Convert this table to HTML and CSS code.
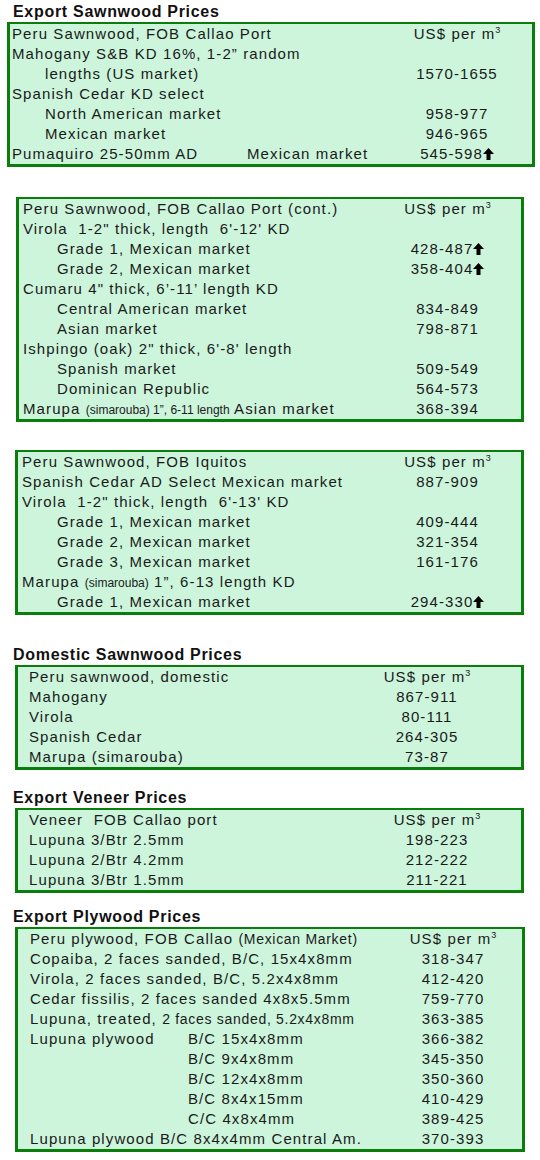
FILE: index.html
```html
<!DOCTYPE html>
<html lang="en">
<head>
<meta charset="utf-8">
<title>Peru Prices</title>
<link rel="stylesheet" href="styles.css">
</head>
<body>
<div class="page">
  <h2 class="heading h-first">Export Sawnwood Prices</h2>
  <div class="box box-a">
    <div class="row"><div class="lbl">Peru Sawnwood, FOB Callao Port</div><div class="val">US$ per m<sup class="sup">3</sup></div></div>
    <div class="row"><div class="lbl">Mahogany S&amp;B KD 16%, 1-2” random</div><div class="val"></div></div>
    <div class="row"><div class="lbl ind">lengths (US market)</div><div class="val">1570-1655</div></div>
    <div class="row"><div class="lbl">Spanish Cedar KD select</div><div class="val"></div></div>
    <div class="row"><div class="lbl ind">North American market</div><div class="val">958-977</div></div>
    <div class="row"><div class="lbl ind">Mexican market</div><div class="val">946-965</div></div>
    <div class="row"><div class="lbl"><span class="col1 w-puma">Pumaquiro 25-50mm AD</span><span>Mexican market</span></div><div class="val">545-598<svg class="up" viewBox="0 0 11 12"><path d="M5.5 0 L11 6 L7.5 6 L7.5 12 L3.5 12 L3.5 6 L0 6 Z"/></svg></div></div>
  </div>

  <div class="box box-b">
    <div class="row"><div class="lbl">Peru Sawnwood, FOB Callao Port (cont.)</div><div class="val">US$ per m<sup class="sup">3</sup></div></div>
    <div class="row"><div class="lbl">Virola&nbsp; 1-2" thick, length&nbsp; 6'-12' KD</div><div class="val"></div></div>
    <div class="row"><div class="lbl ind">Grade 1, Mexican market</div><div class="val">428-487<svg class="up" viewBox="0 0 11 12"><path d="M5.5 0 L11 6 L7.5 6 L7.5 12 L3.5 12 L3.5 6 L0 6 Z"/></svg></div></div>
    <div class="row"><div class="lbl ind">Grade 2, Mexican market</div><div class="val">358-404<svg class="up" viewBox="0 0 11 12"><path d="M5.5 0 L11 6 L7.5 6 L7.5 12 L3.5 12 L3.5 6 L0 6 Z"/></svg></div></div>
    <div class="row"><div class="lbl">Cumaru 4" thick, 6’-11’ length KD</div><div class="val"></div></div>
    <div class="row"><div class="lbl ind">Central American market</div><div class="val">834-849</div></div>
    <div class="row"><div class="lbl ind">Asian market</div><div class="val">798-871</div></div>
    <div class="row"><div class="lbl">Ishpingo (oak) 2" thick, 6'-8' length</div><div class="val"></div></div>
    <div class="row"><div class="lbl ind">Spanish market</div><div class="val">509-549</div></div>
    <div class="row"><div class="lbl ind">Dominican Republic</div><div class="val">564-573</div></div>
    <div class="row"><div class="lbl">Marupa <span class="narrow">(simarouba) 1”, 6-11 length</span> Asian market</div><div class="val">368-394</div></div>
  </div>

  <div class="box box-c">
    <div class="row"><div class="lbl">Peru Sawnwood, FOB Iquitos</div><div class="val">US$ per m<sup class="sup">3</sup></div></div>
    <div class="row"><div class="lbl">Spanish Cedar AD Select Mexican market</div><div class="val">887-909</div></div>
    <div class="row"><div class="lbl">Virola&nbsp; 1-2" thick, length&nbsp; 6'-13' KD</div><div class="val"></div></div>
    <div class="row"><div class="lbl ind">Grade 1, Mexican market</div><div class="val">409-444</div></div>
    <div class="row"><div class="lbl ind">Grade 2, Mexican market</div><div class="val">321-354</div></div>
    <div class="row"><div class="lbl ind">Grade 3, Mexican market</div><div class="val">161-176</div></div>
    <div class="row"><div class="lbl">Marupa <span class="narrow">(simarouba)</span> 1”, 6-13 length KD</div><div class="val"></div></div>
    <div class="row"><div class="lbl ind">Grade 1, Mexican market</div><div class="val">294-330<svg class="up" viewBox="0 0 11 12"><path d="M5.5 0 L11 6 L7.5 6 L7.5 12 L3.5 12 L3.5 6 L0 6 Z"/></svg></div></div>
  </div>

  <h2 class="heading h-dom">Domestic Sawnwood Prices</h2>
  <div class="box box-d">
    <div class="row"><div class="lbl">Peru sawnwood, domestic</div><div class="val">US$ per m<sup class="sup">3</sup></div></div>
    <div class="row"><div class="lbl">Mahogany</div><div class="val">867-911</div></div>
    <div class="row"><div class="lbl">Virola</div><div class="val">80-111</div></div>
    <div class="row"><div class="lbl">Spanish Cedar</div><div class="val">264-305</div></div>
    <div class="row"><div class="lbl">Marupa (simarouba)</div><div class="val">73-87</div></div>
  </div>

  <h2 class="heading h-ven">Export Veneer Prices</h2>
  <div class="box box-e">
    <div class="row"><div class="lbl">Veneer&nbsp; FOB Callao port</div><div class="val">US$ per m<sup class="sup">3</sup></div></div>
    <div class="row"><div class="lbl">Lupuna 3/Btr 2.5mm</div><div class="val">198-223</div></div>
    <div class="row"><div class="lbl">Lupuna 2/Btr 4.2mm</div><div class="val">212-222</div></div>
    <div class="row"><div class="lbl">Lupuna 3/Btr 1.5mm</div><div class="val">211-221</div></div>
  </div>

  <h2 class="heading h-ply">Export Plywood Prices</h2>
  <div class="box box-f">
    <div class="row"><div class="lbl">Peru plywood, FOB Callao <span class="small">(Mexican Market)</span></div><div class="val">US$ per m<sup class="sup">3</sup></div></div>
    <div class="row"><div class="lbl">Copaiba, 2 faces sanded, B/C, 15x4x8mm</div><div class="val">318-347</div></div>
    <div class="row"><div class="lbl">Virola, 2 faces sanded, B/C, 5.2x4x8mm</div><div class="val">412-420</div></div>
    <div class="row"><div class="lbl">Cedar fissilis, 2 faces sanded 4x8x5.5mm</div><div class="val">759-770</div></div>
    <div class="row"><div class="lbl">Lupuna, treated, <span class="small">2 faces sanded, 5.2x4x8mm</span></div><div class="val">363-385</div></div>
    <div class="row"><div class="lbl"><span class="col1 w-ply">Lupuna plywood</span><span>B/C 15x4x8mm</span></div><div class="val">366-382</div></div>
    <div class="row"><div class="lbl"><span class="col1 w-ply"></span><span>B/C 9x4x8mm</span></div><div class="val">345-350</div></div>
    <div class="row"><div class="lbl"><span class="col1 w-ply"></span><span>B/C 12x4x8mm</span></div><div class="val">350-360</div></div>
    <div class="row"><div class="lbl"><span class="col1 w-ply"></span><span>B/C 8x4x15mm</span></div><div class="val">410-429</div></div>
    <div class="row"><div class="lbl"><span class="col1 w-ply"></span><span>C/C 4x8x4mm</span></div><div class="val">389-425</div></div>
    <div class="row"><div class="lbl">Lupuna plywood B/C 8x4x4mm Central Am.</div><div class="val">370-393</div></div>
  </div>
</div>
</body>
</html>
```

FILE: styles.css
```css
html, body {
  margin: 0;
  padding: 0;
  background: #ffffff;
}

body {
  font-family: "Liberation Sans", Arial, sans-serif;
  color: #1a1a1a;
  font-size: 15px;
  letter-spacing: 1.1px;
}

.page {
  width: 540px;
  padding-top: 2px;
}

.heading {
  margin: 0 0 0 13px;
  font-size: 16px;
  font-weight: bold;
  line-height: 20px;
  height: 20px;
  letter-spacing: 0.7px;
  color: #111111;
}

.h-dom { margin-top: 30px; }
.h-ven { margin-top: 18px; }
.h-ply { margin-top: 14px; }

.box {
  box-sizing: border-box;
  background: #ccf5dc;
  border: 3px solid #0b7d0b;
  border-top-width: 2px;
  display: flex;
  flex-direction: column;
}

.row {
  display: grid;
  grid-template-columns: 1fr var(--pw);
  height: 20px;
  line-height: 20px;
  white-space: nowrap;
}

.lbl {
  padding-left: var(--pl);
  overflow: visible;
}

.lbl.ind {
  padding-left: var(--pi);
}

.val {
  text-align: center;
}

.col1 {
  display: inline-block;
}

.w-puma { width: 235px; }
.w-ply { width: 158px; }

.narrow {
  font-family: "Liberation Sans Narrow", "Arial Narrow", "Liberation Sans", sans-serif;
  font-size: 12px;
  letter-spacing: 0;
}

.small {
  font-size: 14px;
  letter-spacing: 0.7px;
}

.sup {
  font-size: 9px;
  letter-spacing: 0;
  vertical-align: 6px;
  line-height: 0;
}

.up {
  width: 11px;
  height: 12px;
  vertical-align: -1px;
  fill: #000000;
}

.box-a {
  margin-left: 7px;
  width: 528px;
  --pw: 150px;
  --pl: 2px;
  --pi: 35px;
}

.box-b {
  margin-top: 30px;
  margin-left: 16px;
  width: 508px;
  --pw: 147px;
  --pl: 4px;
  --pi: 38px;
}

.box-c {
  margin-top: 28px;
  margin-left: 15px;
  width: 509px;
  --pw: 147px;
  --pl: 4px;
  --pi: 39px;
}

.box-d {
  margin-left: 15px;
  width: 509px;
  --pw: 188px;
  --pl: 11px;
}

.box-e {
  margin-left: 15px;
  width: 509px;
  --pw: 168px;
  --pl: 11px;
}

.box-f {
  margin-left: 15px;
  width: 510px;
  --pw: 138px;
  --pl: 12px;
}
```
